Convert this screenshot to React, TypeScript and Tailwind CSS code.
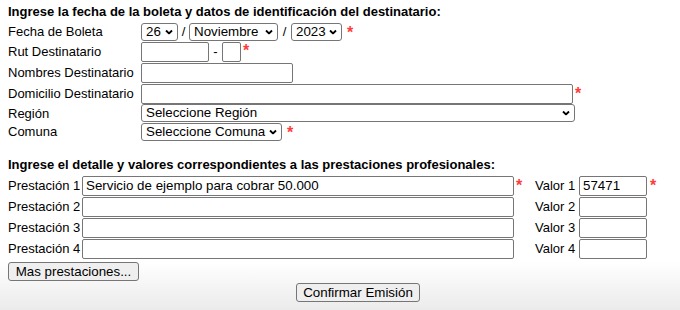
import React from "react";

const field =
  "h-[20px] border border-[#767676] rounded-[2px] bg-white px-[3px] text-[13.33px] text-black outline-none";

function Req({ top = 3 }: { top?: number }) {
  // asterisco rojo de campo obligatorio
  return (
    <span
      className={
        "self-start leading-none text-[16px] font-bold text-[#ff3b3b] " +
        (top === 3 ? "mt-[3px]" : top === 4 ? "mt-[4px]" : "mt-[2px]")
      }
    >
      *
    </span>
  );
}

function Select({
  value,
  options,
  w,
}: {
  value: string;
  options: string[];
  w: string;
}) {
  return (
    <div className={"relative h-[18px] shrink-0 " + w}>
      <select
        defaultValue={value}
        className="h-[18px] w-full appearance-none rounded-[3px] border border-[#767676] bg-white pl-[4px] pr-[14px] text-[13.33px] leading-[16px] text-black outline-none"
      >
        {options.map((o) => (
          <option key={o}>{o}</option>
        ))}
      </select>
      <svg
        width="8"
        height="5"
        viewBox="0 0 8 5"
        className="pointer-events-none absolute right-[5px] top-1/2 -translate-y-1/2"
      >
        <path d="M1 1l3 3 3-3" fill="none" stroke="#000" strokeWidth="1.8" />
      </svg>
    </div>
  );
}

function Row({
  label,
  h,
  children,
}: {
  label: string;
  h: string;
  children: React.ReactNode;
}) {
  return (
    <div className={"flex items-center " + h}>
      <div className="w-[133px] shrink-0">{label}</div>
      {children}
    </div>
  );
}

function Prestacion({ n, text, valor }: { n: number; text?: string; valor?: string }) {
  return (
    <div className="flex h-[21px] items-center">
      <div className="w-[74px] shrink-0">Prestación {n}</div>
      <input type="text" defaultValue={text} className={field + " w-[432px] shrink-0"} />
      <div className="flex h-full w-[21px] shrink-0 pl-[2px]">{n === 1 && <Req />}</div>
      <div className="w-[44px] shrink-0">Valor {n}</div>
      <input type="text" defaultValue={valor} className={field + " w-[68px] shrink-0"} />
      <div className="flex h-full pl-[3px]">{n === 1 && <Req />}</div>
    </div>
  );
}

export default function App() {
  return (
    <div className="h-[310px] w-[680px] overflow-hidden bg-[linear-gradient(to_bottom,#ffffff_262px,#ebebeb_310px)] pl-[8px] pt-[4px] font-['Liberation_Sans',Arial,sans-serif] text-[13px] leading-[15px] text-black">
      {/* datos del destinatario */}
      <div className="font-bold">
        Ingrese la fecha de la boleta y datos de identificación del destinatario:
      </div>
      <div className="mt-[3px]">
        <Row label="Fecha de Boleta" h="h-[19px]">
          <Select value="26" options={["26"]} w="w-[37px]" />
          <span className="w-[11px] text-center">/</span>
          <Select value="Noviembre" options={["Noviembre"]} w="w-[89px]" />
          <span className="w-[13px] text-center">/</span>
          <Select value="2023" options={["2023"]} w="w-[51px]" />
          <span className="flex h-full pl-[5px]">
            <Req />
          </span>
        </Row>
        <Row label="Rut Destinatario" h="h-[21px]">
          <input type="text" className={field + " w-[68px] shrink-0"} />
          <span className="w-[13px] text-center">-</span>
          <input type="text" className={field + " w-[19px] shrink-0"} />
          <span className="flex h-full pl-[2px]">
            <Req top={2} />
          </span>
        </Row>
        <Row label="Nombres Destinatario" h="h-[21px]">
          <input type="text" className={field + " w-[152px] shrink-0"} />
        </Row>
        <Row label="Domicilio Destinatario" h="h-[21px]">
          <input type="text" className={field + " w-[432px] shrink-0"} />
          <span className="flex h-full pl-[2px]">
            <Req />
          </span>
        </Row>
        <Row label="Región" h="h-[18px]">
          <Select value="Seleccione Región" options={["Seleccione Región"]} w="w-[434px]" />
        </Row>
        <Row label="Comuna" h="h-[19px]">
          <Select value="Seleccione Comuna" options={["Seleccione Comuna"]} w="w-[141px]" />
          <span className="flex h-full pl-[5px]">
            <Req />
          </span>
        </Row>
      </div>

      {/* detalle de prestaciones */}
      <div className="mt-[16px] font-bold">
        Ingrese el detalle y valores correspondientes a las prestaciones profesionales:
      </div>
      <div className="mt-[3px]">
        <Prestacion n={1} text="Servicio de ejemplo para cobrar 50.000" valor="57471" />
        <Prestacion n={2} />
        <Prestacion n={3} />
        <Prestacion n={4} />
      </div>
      <div className="mt-[3px] flex">
        <button className="h-[19px] w-[131px] rounded-[3px] border border-[#767676] bg-[#efefef] text-[13.33px] leading-[17px]">
          Mas prestaciones...
        </button>
      </div>
      <div className="mt-[2px] flex w-[700px] justify-center">
        <button className="h-[19px] w-[124px] rounded-[3px] border border-[#767676] bg-[#efefef] text-[13.33px] leading-[17px]">
          Confirmar Emisión
        </button>
      </div>
    </div>
  );
}
